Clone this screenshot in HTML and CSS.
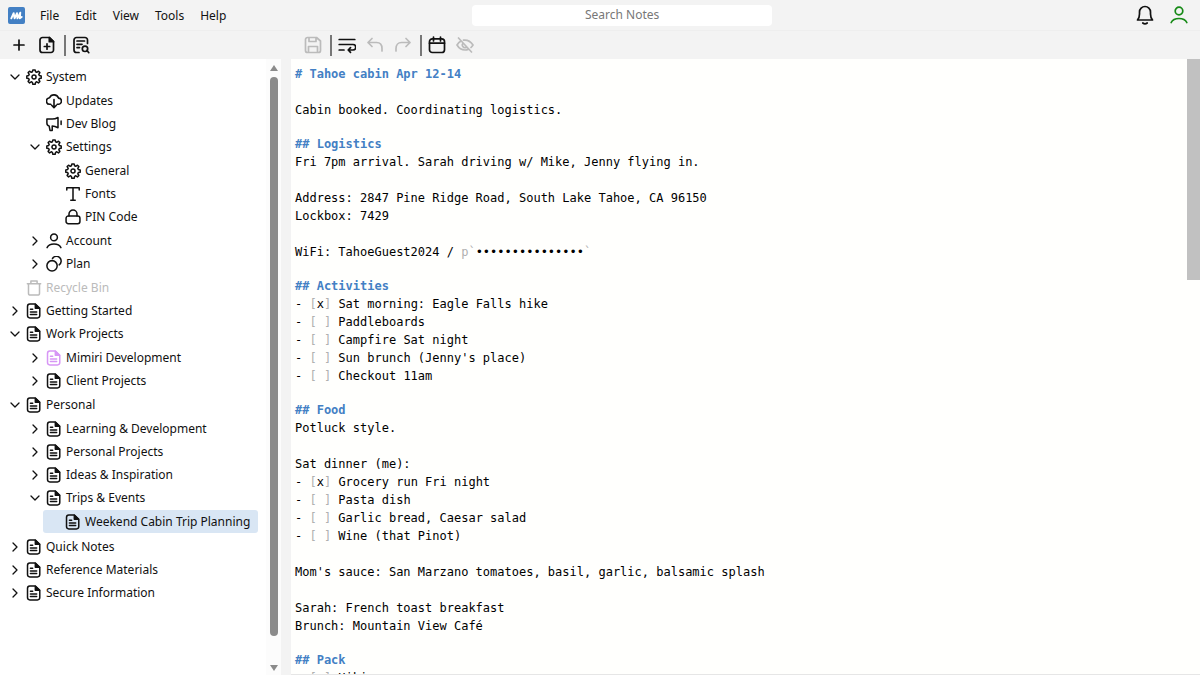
FILE: index.html
```html
<!DOCTYPE html>
<html lang="en">
<head>
<meta charset="utf-8">
<title>Mimiri Notes</title>
<link rel="stylesheet" href="styles.css">
</head>
<body>
<svg class="sprite" aria-hidden="true">
  <symbol id="gear" viewBox="0 0 18 18"><path d="M7.700 1h2.600l.5 2.100 1.300.6L14 2.500l1.600 1.600-1.200 1.900.6 1.300 2.100.5v2.500l-2.100.5-.6 1.300 1.200 1.900L14 15.600l-1.900-1.200-1.300.6-.5 2.100H7.700L7.200 15l-1.300-.6L4 15.600 2.400 14l1.200-1.900-.6-1.300-2.100-.5V7.800L3 7.300 3.600 6 2.400 4.100 4 2.500l1.900 1.200 1.300-.6z"/><circle cx="9" cy="9" r="2.300"/></symbol>
  <symbol id="cloud" viewBox="0 1 17 17"><path d="M5 13H4.200a3.500 3.500 0 0 1-.4-7A5.100 5.100 0 0 1 13.300 6.400a3.300 3.300 0 0 1-.4 6.600H12M8.500 8v8.500M6 14l2.500 2.600L11 14"/></symbol>
  <symbol id="horn" viewBox="0 0 18 18"><path d="M1 3.500h6c2.500 0 4.500-.7 6.500-1.800v11.500c-2-1.200-4-2-6.500-2v5H4.500l-1-5C1.800 11 1 10 1 8zM17 5.500v4"/></symbol>
  <symbol id="letter" viewBox="0 0 18 18"><path d="M2 4.500V2h14v2.500M9 2v14M6.500 16h5"/></symbol>
  <symbol id="lock" viewBox="0 0 18 18"><rect x="1.200" y="8" width="15.600" height="8.500" rx="2.500"/><path d="M4.500 8V5.700a4.500 4.500 0 0 1 9 0V8"/></symbol>
  <symbol id="person" viewBox="0 0 18 18"><circle cx="9" cy="5" r="3.800"/><path d="M1.200 16.500c1.300-2.700 4-4 7.800-4s6.500 1.300 7.800 4"/></symbol>
  <symbol id="plan" viewBox="0 0 18 18"><circle cx="6.800" cy="11" r="5.800"/><path d="M7.300 2.800a5.300 5.300 0 1 1 7.500 7.200"/></symbol>
  <symbol id="bin" viewBox="0 0 18 18"><path d="M1.500 4.200h15M5.500 4V1.200h7V4M2.800 4.500v10.300c0 1.500.7 2.200 2.200 2.200h8c1.500 0 2.200-.7 2.200-2.200V4.500"/></symbol>
  <symbol id="note" viewBox="0 0 18 18"><path d="M4.300 1.200h6.200L15.500 6v8.200a2.600 2.600 0 0 1-2.600 2.600H4.300a2.600 2.600 0 0 1-2.600-2.600V3.800a2.600 2.600 0 0 1 2.600-2.600zM5 7h2.500M5 10h7M5 13h7"/><path d="M10.500 1.500V6h4.700z" fill="currentColor"/></symbol>
  <symbol id="down" viewBox="0 0 10 10"><path d="M1 3l4 4 4-4"/></symbol>
  <symbol id="right" viewBox="0 0 10 10"><path d="M3 1l4 4-4 4"/></symbol>
  <symbol id="plus" viewBox="0 0 18 18"><path d="M9 4v10M4 9h10"/></symbol>
  <symbol id="newnote" viewBox="0 0 18 18"><path d="M4.500 1.500h7l4 4V14a2.500 2.500 0 0 1-2.500 2.500H4.500A2.500 2.500 0 0 1 2 14V4a2.500 2.500 0 0 1 2.500-2.500zM9 7.800v5.400M6.300 10.500h5.400"/><path d="M11.300 1.500v4.200h4.200z" fill="currentColor"/></symbol>
  <symbol id="find" viewBox="0 0 18 18"><path d="M7 16.500H4.500A2.500 2.500 0 0 1 2 14V4a2.500 2.500 0 0 1 2.500-2.500h8.500A2.500 2.500 0 0 1 15.500 4v3.500M5 5h7.500M5 8.300h5M5 11.600h2.500M15 14.500l1.800 2.200"/><circle cx="13" cy="12.800" r="2.700"/></symbol>
  <symbol id="save" viewBox="0 0 18 18"><path d="M3.500 1.500h9L16.500 5v9.500a2 2 0 0 1-2 2h-11a2 2 0 0 1-2-2v-11a2 2 0 0 1 2-2zM5 1.500v4h7v-4M4.500 16.500v-6h9v6"/></symbol>
  <symbol id="wrap" viewBox="0 0 18 18"><path d="M1.200 3.500h15.600M1.200 8.500H15a2.700 2.700 0 0 1 0 5.500h-4.500M1.200 14H6M12.500 11.700 10.200 14l2.300 2.300"/></symbol>
  <symbol id="undo" viewBox="0 0 18 18"><path d="M6 2.500 2 6.500l4 4M2 6.500h8.500c3.500 0 5.500 2.500 5.500 6V15"/></symbol>
  <symbol id="redo" viewBox="0 0 18 18"><path d="M12 2.500l4 4-4 4M16 6.500H7.500C4 6.500 2 9 2 12.500V15"/></symbol>
  <symbol id="calendar" viewBox="0 0 18 18"><rect x="1.500" y="2.800" width="15" height="13.700" rx="2.800"/><path d="M1.500 7.200h15M5.500 1v4M12.500 1v4"/></symbol>
  <symbol id="hidden" viewBox="0 0 18 18"><path d="M5 5C3.300 6 2 7.400 1 9c1.800 3 4.600 5 8 5 1.300 0 2.500-.3 3.500-.8M7.500 4.200C12 3.500 15 6 17 9c-.6 1-1.300 1.800-2 2.500M7 7.200a2.700 2.700 0 0 0 3.800 3.800M2.500 2l13 14"/></symbol>
  <symbol id="bell" viewBox="0 0 18 20"><path d="M1.500 15c1.300-1.500 2-3.500 2-6V7a5.500 5.500 0 0 1 11 0v2c0 2.500.7 4.500 2 6zM6.800 18c1.200 1 3.200 1 4.400 0"/></symbol>
</svg>

<div class="app">
  <header class="menubar">
    <svg class="logo" viewBox="0 0 18 18" role="img" aria-label="Mimiri"><rect width="18" height="18" rx="2" fill="#4380c4"/><path d="M3.500 12 6 6.500 7 12l2.500-5.500.5 5.500 3-6-.5 6 2-1.500" fill="none" stroke="#fff" stroke-width="2" stroke-linejoin="round" stroke-linecap="round"/></svg>
    <nav class="menus"><button>File</button><button>Edit</button><button>View</button><button>Tools</button><button>Help</button></nav>
    <input class="search" type="search" placeholder="Search Notes" aria-label="Search Notes">
    <div class="status">
      <button aria-label="Notifications"><svg class="icon bell"><use href="#bell"/></svg></button>
      <button class="online" aria-label="Account"><svg class="icon"><use href="#person"/></svg></button>
    </div>
  </header>

  <div class="toolbar">
    <div class="tools tree-tools">
      <button aria-label="New"><svg class="icon"><use href="#plus"/></svg></button>
      <button aria-label="New child note"><svg class="icon"><use href="#newnote"/></svg></button>
      <span class="rule"></span>
      <button aria-label="Find in notes"><svg class="icon"><use href="#find"/></svg></button>
    </div>
    <div class="tools">
      <button aria-label="Save" disabled><svg class="icon"><use href="#save"/></svg></button>
      <span class="rule"></span>
      <button aria-label="Word wrap"><svg class="icon"><use href="#wrap"/></svg></button>
      <button aria-label="Undo" disabled><svg class="icon"><use href="#undo"/></svg></button>
      <button aria-label="Redo" disabled><svg class="icon"><use href="#redo"/></svg></button>
      <span class="rule"></span>
      <button aria-label="Insert date"><svg class="icon"><use href="#calendar"/></svg></button>
      <button aria-label="Hide passwords" disabled><svg class="icon"><use href="#hidden"/></svg></button>
    </div>
  </div>

  <main class="panes">
    <aside class="sidebar">
      <ul class="tree">
        <li><div class="row"><svg class="chev"><use href="#down"/></svg><svg class="icon"><use href="#gear"/></svg>System</div>
          <ul>
            <li><div class="row"><span class="chev"></span><svg class="icon"><use href="#cloud"/></svg>Updates</div></li>
            <li><div class="row"><span class="chev"></span><svg class="icon"><use href="#horn"/></svg>Dev Blog</div></li>
            <li><div class="row"><svg class="chev"><use href="#down"/></svg><svg class="icon"><use href="#gear"/></svg>Settings</div>
              <ul>
                <li><div class="row"><span class="chev"></span><svg class="icon"><use href="#gear"/></svg>General</div></li>
                <li><div class="row"><span class="chev"></span><svg class="icon"><use href="#letter"/></svg>Fonts</div></li>
                <li><div class="row"><span class="chev"></span><svg class="icon"><use href="#lock"/></svg>PIN Code</div></li>
              </ul>
            </li>
            <li><div class="row"><svg class="chev"><use href="#right"/></svg><svg class="icon"><use href="#person"/></svg>Account</div></li>
            <li><div class="row"><svg class="chev"><use href="#right"/></svg><svg class="icon"><use href="#plan"/></svg>Plan</div></li>
          </ul>
        </li>
        <li><div class="row muted"><span class="chev"></span><svg class="icon"><use href="#bin"/></svg>Recycle Bin</div></li>
        <li><div class="row"><svg class="chev"><use href="#right"/></svg><svg class="icon"><use href="#note"/></svg>Getting Started</div></li>
        <li><div class="row"><svg class="chev"><use href="#down"/></svg><svg class="icon"><use href="#note"/></svg>Work Projects</div>
          <ul>
            <li><div class="row"><svg class="chev"><use href="#right"/></svg><svg class="icon shared"><use href="#note"/></svg>Mimiri Development</div></li>
            <li><div class="row"><svg class="chev"><use href="#right"/></svg><svg class="icon"><use href="#note"/></svg>Client Projects</div></li>
          </ul>
        </li>
        <li><div class="row"><svg class="chev"><use href="#down"/></svg><svg class="icon"><use href="#note"/></svg>Personal</div>
          <ul>
            <li><div class="row"><svg class="chev"><use href="#right"/></svg><svg class="icon"><use href="#note"/></svg>Learning &amp; Development</div></li>
            <li><div class="row"><svg class="chev"><use href="#right"/></svg><svg class="icon"><use href="#note"/></svg>Personal Projects</div></li>
            <li><div class="row"><svg class="chev"><use href="#right"/></svg><svg class="icon"><use href="#note"/></svg>Ideas &amp; Inspiration</div></li>
            <li><div class="row"><svg class="chev"><use href="#down"/></svg><svg class="icon"><use href="#note"/></svg>Trips &amp; Events</div>
              <ul>
                <li><div class="row selected"><span class="chev"></span><svg class="icon"><use href="#note"/></svg>Weekend Cabin Trip Planning</div></li>
              </ul>
            </li>
          </ul>
        </li>
        <li><div class="row"><svg class="chev"><use href="#right"/></svg><svg class="icon"><use href="#note"/></svg>Quick Notes</div></li>
        <li><div class="row"><svg class="chev"><use href="#right"/></svg><svg class="icon"><use href="#note"/></svg>Reference Materials</div></li>
        <li><div class="row"><svg class="chev"><use href="#right"/></svg><svg class="icon"><use href="#note"/></svg>Secure Information</div></li>
      </ul>
      <div class="scrollbar">
        <svg class="arrow" viewBox="0 0 10 8"><path d="M5 1 9 7H1z"/></svg>
        <div class="track"><div class="thumb"></div></div>
        <svg class="arrow" viewBox="0 0 10 8"><path d="M5 7 9 1H1z"/></svg>
      </div>
    </aside>

    <article class="editor">
      <div class="text">
        <section><h1># Tahoe cabin Apr 12-14</h1><p>
Cabin booked. Coordinating logistics.</p></section>
        <section><h2>## Logistics</h2><p>Fri 7pm arrival. Sarah driving w/ Mike, Jenny flying in.

Address: 2847 Pine Ridge Road, South Lake Tahoe, CA 96150
Lockbox: 7429

WiFi: TahoeGuest2024 / <i>p`</i>•••••••••••••••<i>`</i></p></section>
        <section><h2>## Activities</h2><p>- <i>[</i>x<i>]</i> Sat morning: Eagle Falls hike
- <i>[ ]</i> Paddleboards
- <i>[ ]</i> Campfire Sat night
- <i>[ ]</i> Sun brunch (Jenny's place)
- <i>[ ]</i> Checkout 11am</p></section>
        <section><h2>## Food</h2><p>Potluck style.

Sat dinner (me):
- <i>[</i>x<i>]</i> Grocery run Fri night
- <i>[ ]</i> Pasta dish
- <i>[ ]</i> Garlic bread, Caesar salad
- <i>[ ]</i> Wine (that Pinot)

Mom's sauce: San Marzano tomatoes, basil, garlic, balsamic splash

Sarah: French toast breakfast
Brunch: Mountain View Café</p></section>
        <section><h2>## Pack</h2><p>- <i>[ ]</i> Hiking gear</p></section>
      </div>
      <div class="side-scroll"><div class="side-thumb"></div></div>
    </article>
  </main>
</div>
</body>
</html>
```
FILE: styles.css
```css
* { box-sizing: border-box; }
body {
  margin: 0;
  background: #f3f3f3;
  color: #111;
  font: 12px/23px "Noto Sans", "Open Sans", sans-serif;
}
button {
  display: flex;
  align-items: center;
  justify-content: center;
  padding: 0;
  border: 0;
  background: none;
  color: inherit;
  font: inherit;
}
.sprite { display: none; }
.icon, .chev {
  flex: none;
  fill: none;
  stroke: currentColor;
  stroke-width: 1.7px;
  stroke-linecap: round;
  stroke-linejoin: round;
}
.icon { width: 16px; height: 16px; }
.chev { width: 10px; height: 10px; margin-right: 2px; stroke-width: 1.3px; }

.app { display: flex; flex-direction: column; height: 100vh; }

.menubar {
  display: grid;
  grid-template-columns: 17px 51fr 300px 49fr;
  column-gap: 15px;
  align-items: center;
  flex: none;
  height: 31px;
  padding: 0 12px 0 8px;
  border-bottom: 1px solid #eee;
}
.logo { width: 17px; height: 17px; }
.menus { display: flex; gap: 16px; }
.search {
  width: 100%;
  height: 21px;
  padding: 0 0 2px;
  border: 0;
  border-radius: 4px;
  background: #fff;
  font: inherit;
  text-align: center;
}
.search::placeholder { color: #777; opacity: 1; }
.search::-webkit-search-cancel-button { display: none; }
.status { display: flex; justify-content: flex-end; gap: 16px; }
.status .icon { width: 18px; height: 18px; }
.status .bell { height: 20px; }
.online { color: #168a16; }

.toolbar { display: flex; flex: none; height: 28px; align-items: center; }
.tools { display: flex; align-items: center; }
.tools button { width: 28px; height: 28px; }
.tools .icon { width: 18px; height: 18px; }
.tools button:disabled { color: #bbb; }
.tree-tools { width: 299px; padding-left: 5px; }
.rule { width: 2px; height: 21px; margin: 0 1px 0 3px; background: #777; }

.panes { display: flex; flex: 1; min-height: 0; }
.sidebar { display: flex; flex: none; width: 281px; background: #fff; }
.tree { flex: 1; min-width: 0; padding: 6px 8px 0 4px; overflow: hidden; }
.tree, .tree ul { margin: 0; list-style: none; }
.tree ul { padding: 1px 0 1px 19px; }
.tree > li > ul { padding-left: 20px; }
.row {
  display: flex;
  align-items: center;
  gap: 4px;
  height: 23px;
  padding-left: 6px;
  white-space: nowrap;
}
.muted { color: #bbb; }
.shared { color: #d796f5; }
.selected { border-radius: 3px; background: #d9e6f4; }

.scrollbar {
  display: flex;
  flex-direction: column;
  align-items: center;
  width: 15px;
  padding: 5px 0 3px;
  background: #fcfcfc;
}
.arrow { width: 10px; height: 8px; fill: #8b8b8b; }
.track { flex: 1; width: 8px; padding: 5px 0; }
.thumb { height: 96%; border-radius: 4px; background: #8b8b8b; }

.editor {
  display: flex;
  flex: 1;
  min-width: 0;
  margin-left: 10px;
  overflow: hidden;
  background: #fffffd;
  border-bottom: 1px solid #e6e6e6;
}
.text {
  display: flex;
  flex: 1;
  flex-direction: column;
  gap: 16px;
  padding: 6px 4px;
  color: #000;
  font: 12px/18px "DejaVu Sans Mono", monospace;
}
.text h1, .text h2, .text p { margin: 0; font: inherit; white-space: pre-wrap; }
.text h1, .text h2 { color: #4380c4; font-weight: bold; }
.text i { color: #b0b0b0; font-style: normal; }
.side-scroll { flex: none; width: 13px; }
.side-thumb { height: 36%; background: #c1c1c1; }
```
